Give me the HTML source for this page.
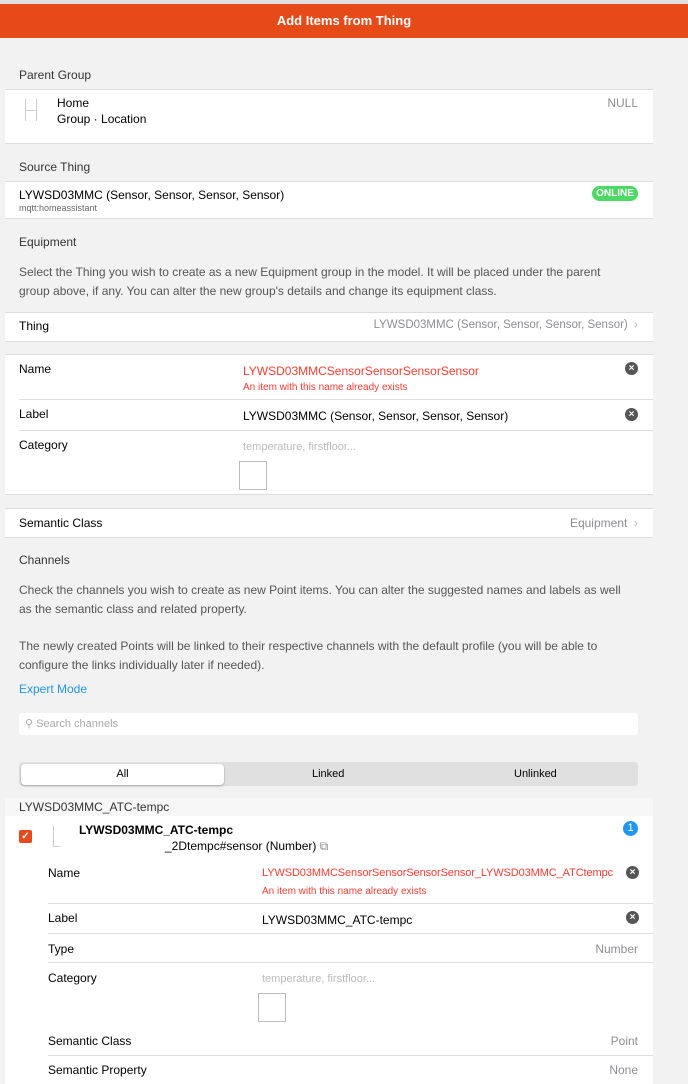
<!DOCTYPE html>
<html><head><meta charset="utf-8"><style>
*{margin:0;padding:0;box-sizing:border-box}
body{width:688px;height:1084px;overflow:hidden;background:#f2f2f2;font-family:"Liberation Sans",sans-serif;font-size:12px;color:#000;position:relative}
.a{position:absolute;white-space:nowrap}
.r{position:absolute;white-space:nowrap;text-align:right}
.panel{position:absolute;left:5px;width:648px;background:#fff;border-top:1px solid #ddd;border-bottom:1px solid #ddd}
.hr{position:absolute;height:1px;background:#ddd}
.g{color:#333}
.muted{color:#8e8e93}
.red{color:#ff3b30}
.x{position:absolute;width:13px;height:13px;border-radius:50%;background:#555;color:#fff;font-size:10px;line-height:13px;text-align:center;font-weight:bold}
.ph{color:#bbb}
.sq{position:absolute;width:28px;height:29px;border:1px solid #bbb;background:#fff}
.chev{color:#bbb}
.p{position:absolute;left:19px;color:#555;line-height:19px;white-space:normal}
</style></head><body>
<div class="a" style="left:0;top:0;width:688px;height:4px;background:#e0e0e0"></div>
<div class="a" style="left:0;top:4px;width:688px;height:34px;background:#e64a19;color:#fff;font-weight:bold;font-size:13px;text-align:center;line-height:34px">Add Items from Thing</div>

<div class="a g" style="left:19px;top:68px">Parent Group</div>
<div class="panel" style="top:89px;height:55px"></div>
<div class="a" style="left:25px;top:99px;width:12px;height:22px;border-left:1px solid #ccc;border-right:1px solid #ccc"></div>
<div class="a" style="left:25px;top:110px;width:12px;height:1px;background:#ccc"></div>
<div class="a" style="left:57px;top:96px">Home</div>
<div class="a" style="left:57px;top:112px">Group · Location</div>
<div class="r muted" style="right:50px;top:96px">NULL</div>

<div class="a g" style="left:19px;top:160px">Source Thing</div>
<div class="panel" style="top:181px;height:38px"></div>
<div class="a" style="left:19px;top:188px">LYWSD03MMC (Sensor, Sensor, Sensor, Sensor)</div>
<div class="a" style="left:19px;top:203px;font-size:9px;color:#666">mqtt:homeassistant</div>
<div class="a" style="left:592px;top:186px;width:46px;height:15px;border-radius:8px;background:#4cd964;color:#fff;font-weight:bold;font-size:10px;text-align:center;line-height:15px">ONLINE</div>

<div class="a g" style="left:19px;top:235px">Equipment</div>
<div class="p" style="top:263px;width:615px">Select the Thing you wish to create as a new Equipment group in the model. It will be placed under the parent group above, if any. You can alter the new group's details and change its equipment class.</div>

<div class="panel" style="top:312px;height:30px"></div>
<div class="a" style="left:19px;top:319px">Thing</div>
<div class="r muted" style="right:50px;top:319px;font-size:11.5px">LYWSD03MMC (Sensor, Sensor, Sensor, Sensor) <span class="chev">&nbsp;›</span></div>

<div class="panel" style="top:354px;height:141px"></div>
<div class="a" style="left:19px;top:362px">Name</div>
<div class="a red" style="left:243px;top:364px">LYWSD03MMCSensorSensorSensorSensor</div>
<div class="a red" style="left:243px;top:382px;font-size:10px">An item with this name already exists</div>
<div class="x" style="left:625px;top:362px">×</div>
<div class="hr" style="left:19px;top:399px;width:634px"></div>
<div class="a" style="left:19px;top:407px">Label</div>
<div class="a" style="left:243px;top:409px">LYWSD03MMC (Sensor, Sensor, Sensor, Sensor)</div>
<div class="x" style="left:625px;top:408px">×</div>
<div class="hr" style="left:19px;top:430px;width:634px"></div>
<div class="a" style="left:19px;top:438px">Category</div>
<div class="a ph" style="left:243px;top:441px;font-size:11px">temperature, firstfloor...</div>
<div class="sq" style="left:239px;top:461px"></div>

<div class="panel" style="top:508px;height:30px"></div>
<div class="a" style="left:19px;top:516px">Semantic Class</div>
<div class="r muted" style="right:50px;top:516px">Equipment <span class="chev">&nbsp;›</span></div>

<div class="a g" style="left:19px;top:553px">Channels</div>
<div class="p" style="top:581px;width:612px">Check the channels you wish to create as new Point items. You can alter the suggested names and labels as well as the semantic class and related property.</div>
<div class="p" style="top:637px;width:612px">The newly created Points will be linked to their respective channels with the default profile (you will be able to configure the links individually later if needed).</div>
<div class="a" style="left:19px;top:682px;color:#2196f3">Expert Mode</div>

<div class="a" style="left:19px;top:713px;width:619px;height:22px;background:#fff;border-radius:3px"></div>
<div class="a ph" style="left:25px;top:717px;font-size:11px;color:#aaa">⚲ Search channels</div>

<div class="a" style="left:19px;top:762px;width:619px;height:24px;background:#e0e0e0;border-radius:4px"></div>
<div class="a" style="left:21px;top:764px;width:203px;height:21px;background:#fff;border-radius:4px;box-shadow:0 1px 2px rgba(0,0,0,.3);text-align:center;line-height:21px;font-size:11px">All</div>
<div class="a" style="left:312px;top:768px;font-size:11px">Linked</div>
<div class="a" style="left:514px;top:768px;font-size:11px">Unlinked</div>

<div class="a" style="left:5px;top:798px;width:648px;height:20px;background:#f7f7f7"></div>
<div class="a g" style="left:19px;top:800px">LYWSD03MMC_ATC-tempc</div>
<div class="a" style="left:5px;top:816px;width:648px;height:268px;background:#fff"></div>
<div class="a" style="left:19px;top:830px;width:13px;height:13px;background:#e64a19;border-radius:2px;color:#fff;font-size:10px;text-align:center;line-height:13px;font-weight:bold">✓</div>
<div class="a" style="left:53px;top:826px;width:7px;height:21px;border-left:1px solid #ccc;border-bottom:1px solid #ccc"></div>
<div class="a" style="left:79px;top:823px;font-weight:bold">LYWSD03MMC_ATC-tempc</div>
<div class="a" style="left:165px;top:839px">_2Dtempc#sensor (Number) <span style="color:#888">⧉</span></div>
<div class="a" style="left:623px;top:821px;width:15px;height:15px;border-radius:50%;background:#2196f3;color:#fff;font-size:11px;text-align:center;line-height:15px">1</div>

<div class="a" style="left:48px;top:866px">Name</div>
<div class="a red" style="left:262px;top:867px;font-size:11px;letter-spacing:-0.1px">LYWSD03MMCSensorSensorSensorSensor_LYWSD03MMC_ATCtempc</div>
<div class="a red" style="left:262px;top:886px;font-size:10px">An item with this name already exists</div>
<div class="x" style="left:626px;top:866px">×</div>
<div class="hr" style="left:48px;top:903px;width:605px"></div>
<div class="a" style="left:48px;top:911px">Label</div>
<div class="a" style="left:262px;top:913px">LYWSD03MMC_ATC-tempc</div>
<div class="x" style="left:626px;top:911px">×</div>
<div class="hr" style="left:48px;top:933px;width:605px"></div>
<div class="a" style="left:48px;top:942px">Type</div>
<div class="r muted" style="right:50px;top:942px">Number</div>
<div class="hr" style="left:48px;top:962px;width:605px"></div>
<div class="a" style="left:48px;top:971px">Category</div>
<div class="a ph" style="left:262px;top:973px;font-size:11px">temperature, firstfloor...</div>
<div class="sq" style="left:258px;top:993px"></div>
<div class="a" style="left:48px;top:1034px">Semantic Class</div>
<div class="r muted" style="right:50px;top:1034px">Point</div>
<div class="hr" style="left:48px;top:1055px;width:605px"></div>
<div class="a" style="left:48px;top:1063px">Semantic Property</div>
<div class="r muted" style="right:50px;top:1063px">None</div>
</body></html>
